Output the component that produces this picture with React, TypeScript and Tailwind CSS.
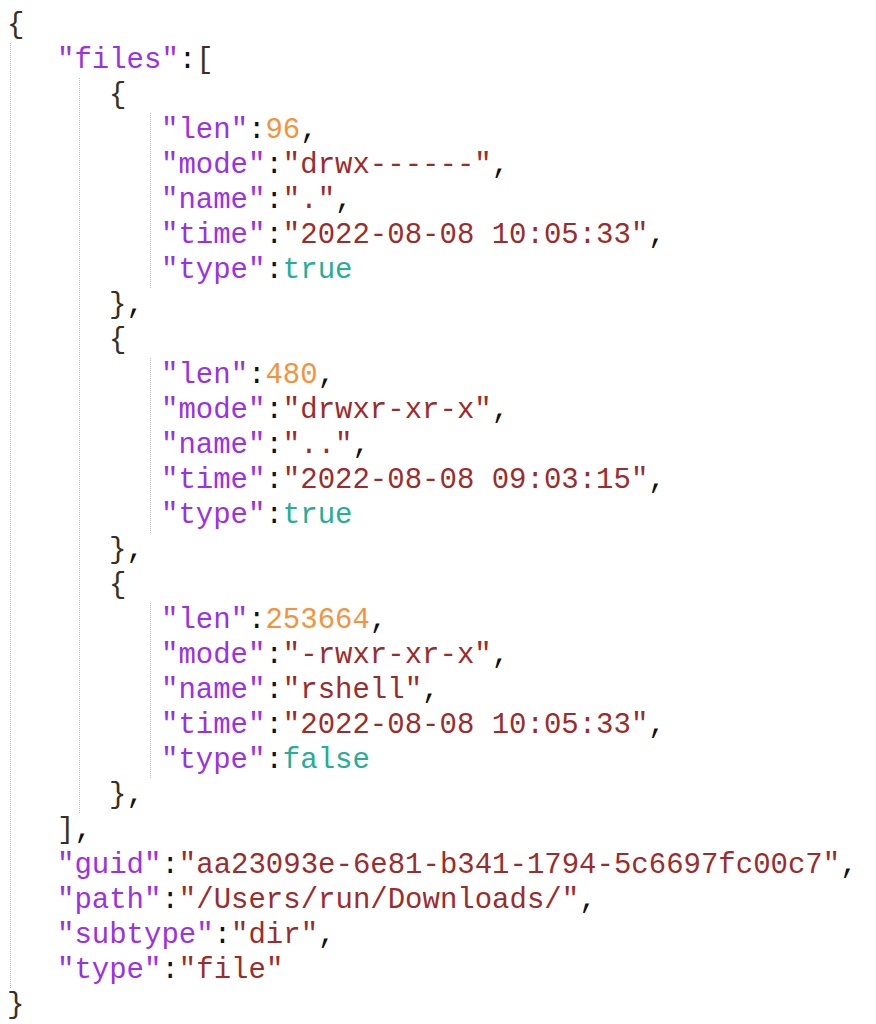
import type { ReactNode } from "react";

type Val = string | number | boolean;

const files = [
  { len: 96, mode: "drwx------", name: ".", time: "2022-08-08 10:05:33", type: true },
  { len: 480, mode: "drwxr-xr-x", name: "..", time: "2022-08-08 09:03:15", type: true },
  { len: 253664, mode: "-rwxr-xr-x", name: "rshell", time: "2022-08-08 10:05:33", type: false },
];

const tail: [string, string][] = [
  ["guid", "aa23093e-6e81-b341-1794-5c6697fc00c7"],
  ["path", "/Users/run/Downloads/"],
  ["subtype", "dir"],
  ["type", "file"],
];

function Line({ children }: { children: ReactNode }) {
  return <div className="h-[35px] leading-[35px] whitespace-pre">{children}</div>;
}

function Key({ k }: { k: string }) {
  return (
    <>
      <span className="text-[#9b30e8]">"{k}"</span>
      <span className="text-[#111]">:</span>
    </>
  );
}

function Value({ v }: { v: Val }) {
  if (typeof v === "number") return <span className="text-[#f7923a]">{v}</span>;
  if (typeof v === "boolean") return <span className="text-[#24ad97]">{String(v)}</span>;
  return <span className="text-[#9e2b2b]">"{v}"</span>;
}

function Brace({ c }: { c: string }) {
  return <span className="text-[#3a2f25]">{c}</span>;
}

function Comma() {
  return <span className="text-[#111]">,</span>;
}

export default function App() {
  return (
    <div className="min-h-[1024px] w-[876px] bg-white pt-[8px] pl-[7px] font-['Liberation_Mono','Courier_New',monospace] text-[29px]">
      <Line>
        <Brace c="{" />
      </Line>
      <div className="ml-[3px] border-l border-dotted border-[#bdbdbd] pl-[46px]">
        <Line>
          <Key k="files" />
          <Brace c="[" />
        </Line>
        <div className="ml-[22px] border-l border-dotted border-[#bdbdbd] pl-[29px]">
          {files.map((f, i) => (
            <div key={i}>
              <Line>
                <Brace c="{" />
              </Line>
              <div className="ml-[41px] border-l border-dotted border-[#bdbdbd] pl-[10px]">
                {Object.entries(f).map(([k, v], j, arr) => (
                  <Line key={k}>
                    <Key k={k} />
                    <Value v={v} />
                    {j < arr.length - 1 && <Comma />}
                  </Line>
                ))}
              </div>
              <Line>
                <Brace c="}" />
                <Comma />
              </Line>
            </div>
          ))}
        </div>
        <Line>
          <Brace c="]" />
          <Comma />
        </Line>
        {tail.map(([k, v], i) => (
          <Line key={k}>
            <Key k={k} />
            <Value v={v} />
            {i < tail.length - 1 && <Comma />}
          </Line>
        ))}
      </div>
      <Line>
        <Brace c="}" />
      </Line>
    </div>
  );
}
